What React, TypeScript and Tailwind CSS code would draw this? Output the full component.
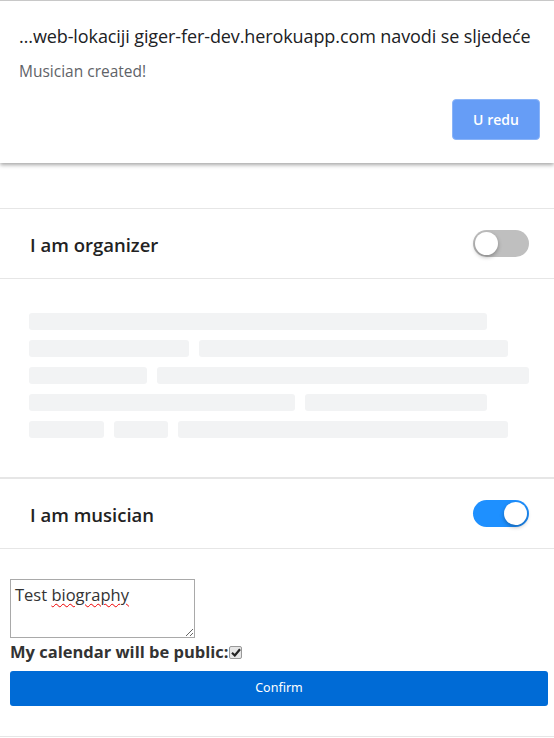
import React from 'react';

const Toggle: React.FC<{ on: boolean }> = ({ on }) => (
  <div
    className={`relative w-[56px] h-[27px] rounded-full ${on ? 'bg-[#1e90ff]' : 'bg-[#bfbfbf]'}`}
  >
    <div
      className={`absolute top-[2px] w-[23px] h-[23px] rounded-full bg-white shadow-[0_2px_4px_rgba(0,0,0,0.3)] ${on ? 'right-[2px]' : 'left-[2px]'}`}
    />
  </div>
);

const SkeletonRow: React.FC<{ widths: number[] }> = ({ widths }) => (
  <div className="flex gap-[10px]">
    {widths.map((w, i) => (
      <div key={i} className="h-[17px] rounded-[3px] bg-[#f2f3f4]" style={{ width: w }} />
    ))}
  </div>
);

export default function App() {
  return (
    <div className="w-[554px] h-[738px] bg-white overflow-hidden font-['Open_Sans','Noto_Sans',sans-serif] text-[#222]">
      {/* Browser alert */}
      <div className="relative z-10 h-[163px] border-t border-[#c8c8c8] bg-white shadow-[0_2px_4px_rgba(0,0,0,0.35)] px-[19px] pt-[22px]">
        <div className="text-[18px] leading-[26px] text-[#202124] tracking-[-0.1px] whitespace-nowrap">
          …web-lokaciji giger-fer-dev.herokuapp.com navodi se sljedeće
        </div>
        <div className="mt-[12px] text-[15.5px] leading-[20px] text-[#5f6368]">Musician created!</div>
        <div className="flex justify-end mt-[18px]">
          <button className="w-[88px] h-[41px] -mr-[5px] rounded-[4px] bg-[#669df6] border border-[#8ab4f8] text-white text-[14px] font-semibold">
            U redu
          </button>
        </div>
      </div>

      <div className="h-[45px]" />

      {/* Organizer */}
      <div className="h-[71px] border-t border-[#e6e6e6] border-b flex items-center justify-between pl-[30px] pr-[25px]">
        <span className="text-[18.5px] font-semibold pt-[2px]">I am organizer</span>
        <Toggle on={false} />
      </div>

      <div className="pt-[34px] pl-[29px] flex flex-col gap-[10px] h-[198px]">
        <SkeletonRow widths={[458]} />
        <SkeletonRow widths={[160, 309]} />
        <SkeletonRow widths={[118, 372]} />
        <SkeletonRow widths={[266, 182]} />
        <SkeletonRow widths={[75, 54, 330]} />
      </div>

      {/* Musician */}
      <div className="h-[72px] border-t-2 border-[#e6e6e6] border-b flex items-center justify-between pl-[30px] pr-[25px]">
        <span className="text-[18.5px] font-semibold pt-[2px]">I am musician</span>
        <Toggle on={true} />
      </div>

      <div className="px-[10px] pt-[30px]">
        <div className="relative w-[185px] h-[59px]">
          <textarea
            readOnly
            value="Test biography"
            className="block w-[185px] h-[59px] border border-[#a9a9a9] px-[4px] py-[4px] text-[16.5px] leading-[22px] text-[#333] font-['Open_Sans',sans-serif] resize-y bg-white"
          />
          <div className="absolute left-[5px] top-[5px] text-[16.5px] leading-[22px] text-transparent pointer-events-none font-['Open_Sans',sans-serif]">
            Test{' '}
            <span className="underline decoration-wavy decoration-[#e00] decoration-1 underline-offset-[2px]">biography</span>
          </div>
        </div>
        <div className="flex items-center mt-[3px] h-[22px]">
          <span className="text-[16.5px] font-bold text-[#333] leading-[22px]">My calendar will be public:</span>
          <span className="w-[13px] h-[13px] ml-[1px] rounded-[2px] border border-[#999] bg-[#e6e6e6] flex items-center justify-center">
            <svg width="10" height="9" viewBox="0 0 10 9">
              <path d="M1 4.8 L3.8 7.5 L9 1.2" fill="none" stroke="#222" strokeWidth="2.2" />
            </svg>
          </span>
        </div>
        <button className="w-[538px] h-[35px] mt-[8px] rounded-[3px] bg-[#006bd6] text-white text-[12.5px] font-['Noto_Sans',sans-serif]">
          Confirm
        </button>
      </div>
      <div className="mt-[30px] border-t border-[#e6e6e6]" />
    </div>
  );
}
